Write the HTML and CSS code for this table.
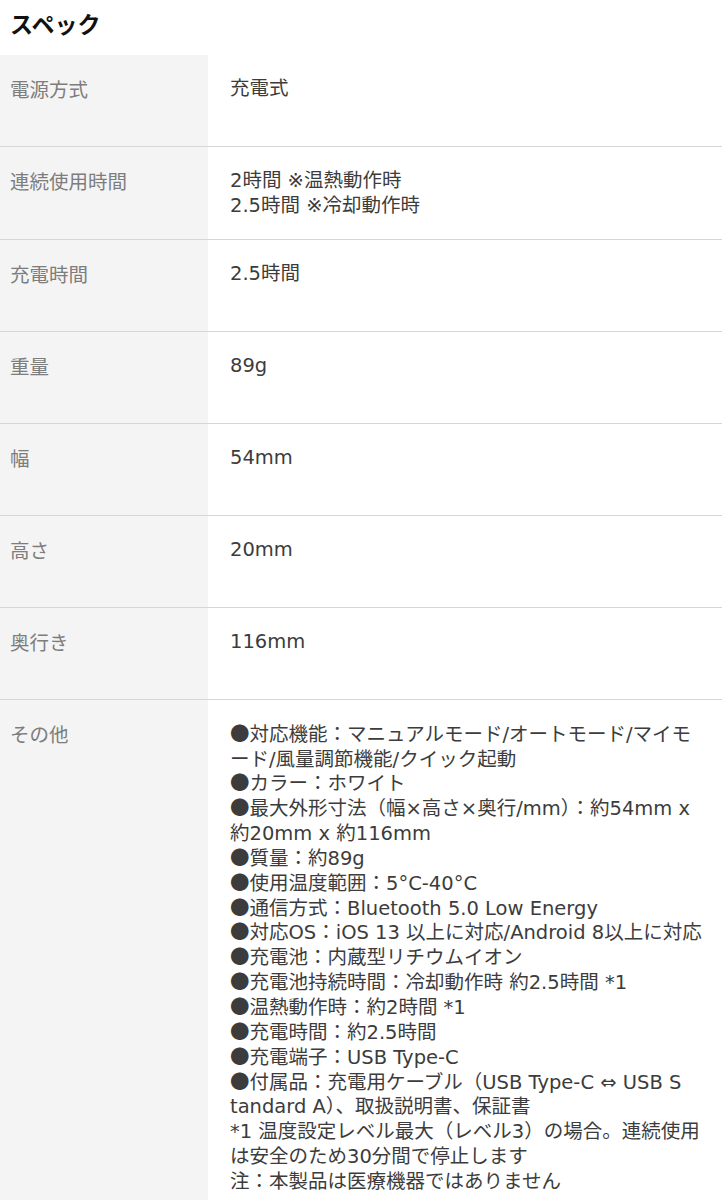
FILE: index.html
```html
<!DOCTYPE html>
<html lang="ja">
<head>
<meta charset="utf-8">
<title>スペック</title>
<link rel="stylesheet" href="styles.css">
</head>
<body>
<section class="spec">
  <h2 class="spec-title">スペック</h2>
  <dl class="spec-table">
    <div class="spec-row">
      <dt class="spec-label">電源方式</dt>
      <dd class="spec-value">充電式</dd>
    </div>
    <div class="spec-row">
      <dt class="spec-label">連続使用時間</dt>
      <dd class="spec-value">2時間 ※温熱動作時<br>2.5時間 ※冷却動作時</dd>
    </div>
    <div class="spec-row">
      <dt class="spec-label">充電時間</dt>
      <dd class="spec-value">2.5時間</dd>
    </div>
    <div class="spec-row">
      <dt class="spec-label">重量</dt>
      <dd class="spec-value">89g</dd>
    </div>
    <div class="spec-row">
      <dt class="spec-label">幅</dt>
      <dd class="spec-value">54mm</dd>
    </div>
    <div class="spec-row">
      <dt class="spec-label">高さ</dt>
      <dd class="spec-value">20mm</dd>
    </div>
    <div class="spec-row">
      <dt class="spec-label">奥行き</dt>
      <dd class="spec-value">116mm</dd>
    </div>
    <div class="spec-row">
      <dt class="spec-label">その他</dt>
      <dd class="spec-value spec-long">
        <ul class="spec-list">
          <li>対応機能：マニュアルモード/オートモード/マイモ<br>ード/風量調節機能/クイック起動</li>
          <li>カラー：ホワイト</li>
          <li>最大外形寸法（幅×高さ×奥行/mm）：約54mm x<br>約20mm x 約116mm</li>
          <li>質量：約89g</li>
          <li>使用温度範囲：5°C-40°C</li>
          <li>通信方式：Bluetooth 5.0 Low Energy</li>
          <li>対応OS：iOS 13 以上に対応/Android 8以上に対応</li>
          <li>充電池：内蔵型リチウムイオン</li>
          <li>充電池持続時間：冷却動作時 約2.5時間 *1</li>
          <li>温熱動作時：約2時間 *1</li>
          <li>充電時間：約2.5時間</li>
          <li>充電端子：USB Type-C</li>
          <li>付属品：充電用ケーブル（USB Type-C ⇔ USB S<br>tandard A）、取扱説明書、保証書</li>
        </ul>
        <p class="spec-note">*1 温度設定レベル最大（レベル3）の場合。連続使用<br>は安全のため30分間で停止します</p>
        <p class="spec-note">注：本製品は医療機器ではありません</p>
      </dd>
    </div>
  </dl>
</section>
</body>
</html>
```

FILE: styles.css
```css
html, body {
  margin: 0;
  padding: 0;
  background: #ffffff;
}

body {
  font-family: "DejaVu Sans", "Noto Sans CJK JP", sans-serif;
  color: #333333;
}

.spec-title {
  margin: 0;
  padding: 8px 10px 17px;
  font-family: "Noto Sans CJK JP", sans-serif;
  font-size: 23px;
  font-weight: 700;
  line-height: 30px;
  color: #111111;
}

.spec-table {
  margin: 0;
  padding: 0;
}

.spec-row {
  display: grid;
  grid-template-columns: 208px 1fr;
  min-height: 91px;
  border-bottom: 1px solid #d6d6d6;
}

.spec-label,
.spec-value {
  margin: 0;
  padding: 22px 0 20px;
  font-size: 19.5px;
  line-height: 24.85px;
}

.spec-label {
  background: #f4f4f4;
  padding-left: 10px;
  color: #7d7d7d;
  font-family: "Noto Sans CJK JP", sans-serif;
}

.spec-value {
  padding-left: 22px;
  padding-right: 8px;
  color: #3c3c3c;
}

.spec-long {
  padding-top: 23px;
}

.spec-list {
  list-style: none;
  margin: 0;
  padding: 0;
}

.spec-list li::before {
  content: "●";
  font-family: "Noto Sans CJK JP", sans-serif;
  line-height: 0;
}

.spec-note {
  margin: 0;
}
```
